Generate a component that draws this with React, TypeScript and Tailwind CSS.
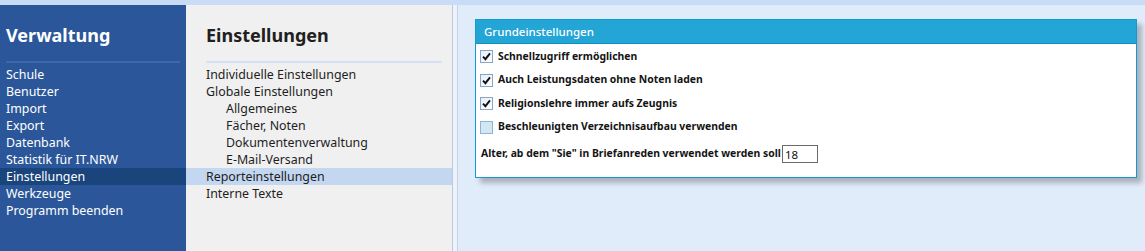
const font = { fontFamily: '"Noto Sans", "Open Sans", sans-serif' };

const adminItems = [
  "Schule",
  "Benutzer",
  "Import",
  "Export",
  "Datenbank",
  "Statistik für IT.NRW",
  "Einstellungen",
  "Werkzeuge",
  "Programm beenden",
];

const settingsItems: { label: string; indent?: boolean; active?: boolean }[] = [
  { label: "Individuelle Einstellungen" },
  { label: "Globale Einstellungen" },
  { label: "Allgemeines", indent: true },
  { label: "Fächer, Noten", indent: true },
  { label: "Dokumentenverwaltung", indent: true },
  { label: "E-Mail-Versand", indent: true },
  { label: "Reporteinstellungen", active: true },
  { label: "Interne Texte" },
];

const options = [
  { label: "Schnellzugriff ermöglichen", checked: true },
  { label: "Auch Leistungsdaten ohne Noten laden", checked: true },
  { label: "Religionslehre immer aufs Zeugnis", checked: true },
  { label: "Beschleunigten Verzeichnisaufbau verwenden", checked: false },
];

function CheckBox({ checked }: { checked: boolean }) {
  if (!checked) {
    return <span className="block h-[13px] w-[13px] shrink-0 border border-[#8eb3d3] bg-[#d3e6f4]" />;
  }
  return (
    <span className="flex h-[13px] w-[13px] shrink-0 items-center justify-center border border-[#86a7c6] bg-gradient-to-br from-[#e4eef7] to-[#ffffff]">
      <svg width="9" height="9" viewBox="0 0 9 9">
        <path d="M1 4.6 L3.4 7.2 L8 1.4" fill="none" stroke="#111" strokeWidth="1.9" />
      </svg>
    </span>
  );
}

export default function App() {
  return (
    <div className="flex h-[251px] w-[1145px] flex-col overflow-hidden bg-[#e1ecfa]" style={font}>
      <div className="h-[5px] shrink-0 bg-[#c8dcf6]" />
      <div className="flex min-h-0 flex-1">
        <aside className="w-[186px] shrink-0 bg-[#2b579a] text-white">
          <h1 className="px-[6px] pt-[18px] text-[18px] leading-[24px] font-bold">Verwaltung</h1>
          <div className="mx-[6px] mt-[14px] mb-[3px] h-[2px] bg-[#3e69a9]" />
          <ul className="text-[12.4px] leading-[17px]">
            {adminItems.map((item) => (
              <li
                key={item}
                className={`h-[17px] px-[6px] ${item === "Einstellungen" ? "bg-[#19447c]" : ""}`}
              >
                {item}
              </li>
            ))}
          </ul>
        </aside>
        <section className="w-[266px] shrink-0 bg-[#f0f0f0] text-[#1e1e1e]">
          <h2 className="pl-[20px] pt-[18px] text-[18px] leading-[24px] font-bold text-[#202020]">
            Einstellungen
          </h2>
          <div className="mt-[14px] mb-[3px] ml-[20px] mr-[10px] h-[2px] bg-[#d4e1f3]" />
          <ul className="text-[12.4px] leading-[17px]">
            {settingsItems.map((item) => (
              <li
                key={item.label}
                className={`h-[17px] ${item.indent ? "pl-[40px]" : "pl-[20px]"} ${
                  item.active ? "bg-[#c4d7f1]" : ""
                }`}
              >
                {item.label}
              </li>
            ))}
          </ul>
        </section>
        <div className="w-[1px] shrink-0 bg-[#b9c9df]" />
        <div className="w-[4px] shrink-0 bg-[#eef3fb]" />
        <div className="w-[1px] shrink-0 bg-[#c3d2e6]" />
        <main className="flex-1 pl-[17px] pt-[14px] pr-[8px]">
          <div className="border border-[#159ace] bg-white shadow-[5px_5px_5px_rgba(0,0,0,0.25)]">
            <div className="flex h-[24px] items-center border-b border-[#0f8fc2] bg-[#23a5d5] px-[8px] text-[11.5px] font-medium text-white">
              Grundeinstellungen
            </div>
            <div className="px-[4px] pt-[1px] pb-[14px] text-[10.4px] font-bold text-[#141414]">
              {options.map((o) => (
                <label key={o.label} className="flex h-[23.5px] items-center gap-[5px]">
                  <CheckBox checked={o.checked} />
                  <span>{o.label}</span>
                </label>
              ))}
              <div className="mt-[6px] flex items-center">
                <span className="pl-[1px]">Alter, ab dem "Sie" in Briefanreden verwendet werden soll</span>
                <input
                  defaultValue="18"
                  className="ml-[1px] h-[18px] w-[36px] border border-[#6b6b6b] px-[2px] text-[11.5px] font-normal text-[#111] outline-none"
                />
              </div>
            </div>
          </div>
        </main>
      </div>
    </div>
  );
}
